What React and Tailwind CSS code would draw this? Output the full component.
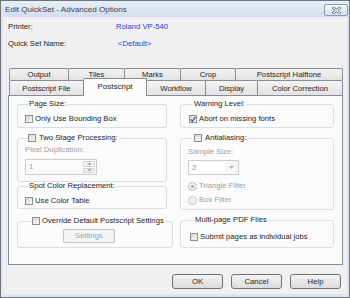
import React from 'react';

const topTabs = [
  { label: 'Output', w: 'w-[60px]' },
  { label: 'Tiles', w: 'w-[57px]' },
  { label: 'Marks', w: 'w-[57px]' },
  { label: 'Crop', w: 'w-[56px]' },
  { label: 'Postscript Halftone', w: 'w-[108px]' },
];

const bottomTabs = [
  { label: 'Postscript File', w: 'w-[75px]' },
  { label: 'Postscript', w: 'w-[64px]', active: true },
  { label: 'Workflow', w: 'w-[60px]' },
  { label: 'Display', w: 'w-[53px]' },
  { label: 'Color Correction', w: 'w-[86px]' },
];

function Checkbox({ checked }) {
  return (
    <span className="flex h-[8px] w-[8px] shrink-0 items-center justify-center border border-[#8e8f8f] bg-linear-to-br from-[#d6d6d6] to-[#f8f8f8]">
      {checked && (
        <svg width="7" height="7" viewBox="0 0 7 7">
          <path d="M0.8 3.4 L2.7 5.6 L6.3 0.8" stroke="#2c4c8e" strokeWidth="1.4" fill="none" />
        </svg>
      )}
    </span>
  );
}

function Radio({ checked }) {
  return (
    <span className="flex h-[9px] w-[9px] shrink-0 items-center justify-center rounded-full border border-[#c4c4c4] bg-[#f2f2f2]">
      {checked && <span className="h-[3px] w-[3px] rounded-full bg-[#a9a9a9]" />}
    </span>
  );
}

function Row({ children, className = '' }) {
  return <div className={`flex h-[10px] items-center whitespace-nowrap leading-[10px] ${className}`}>{children}</div>;
}

function Group({ legend, className = '', children }) {
  return (
    <fieldset className={`rounded-[3px] border border-[#d5dfe5] ${className}`}>
      {legend}
      {children}
    </fieldset>
  );
}

function Legend({ className = '', children }) {
  return <legend className={`whitespace-nowrap px-[1px] leading-[8px] ${className}`}>{children}</legend>;
}

function DialogButton({ children, disabled }) {
  return (
    <div
      className={`flex h-[15px] w-[51px] items-center justify-center rounded-[3px] border bg-linear-to-b ${
        disabled
          ? 'border-[#bfbfbf] from-[#f4f4f4] to-[#f4f4f4] text-[#a3a3a3]'
          : 'border-[#707070] from-[#f3f3f3] to-[#dcdcdc] text-[#1e1e1e]'
      }`}
    >
      {children}
    </div>
  );
}

export default function App() {
  return (
    <div className="flex h-[298px] w-[350px] flex-col border border-[#6f7479] bg-[#dde6f0] font-['Liberation_Sans','Arial',sans-serif] text-[7.7px] text-[#1e1e1e]">
      {/* title bar */}
      <div className="flex h-[16px] shrink-0 items-start justify-between bg-linear-to-b from-[#e7eef8] to-[#d2deed]">
        <span className="mt-[4px] pl-[4px] text-[8.1px] leading-[9px] text-[#3f3f3f]">Edit QuickSet - Advanced Options</span>
        <div className="mr-[1px] mt-[3px] flex h-[12px] w-[24px] items-center justify-center rounded-[2px] border border-[#8c9ab0] bg-linear-to-b from-[#f3f6fa] to-[#d8e1ed]">
          <svg width="9" height="7" viewBox="0 0 9 7">
            <path d="M1.5 1 L7.5 6 M7.5 1 L1.5 6" stroke="#5c6777" strokeWidth="2.6" strokeLinecap="square" />
            <path d="M1.5 1 L7.5 6 M7.5 1 L1.5 6" stroke="#ffffff" strokeWidth="1.1" strokeLinecap="square" />
          </svg>
        </div>
      </div>

      {/* client */}
      <div className="mx-[2px] mb-[3px] flex flex-1 flex-col bg-[#f0f0f0]">
        <div className="mt-[4px] flex h-[12px] items-center pl-[5px] leading-[12px]">
          <span className="w-[108px]">Printer:</span>
          <span className="text-[#2142e0]">Roland VP-540</span>
        </div>
        <div className="mt-[5px] flex h-[12px] items-center pl-[5px] leading-[12px]">
          <span className="w-[110px]">Quick Set Name:</span>
          <span className="text-[#2142e0]">&lt;Default&gt;</span>
        </div>

        {/* tab control */}
        <div className="ml-[5px] mt-[18px] flex w-[335px] flex-col">
          <div className="flex h-[12px] pl-[1px]">
            {topTabs.map((t, i) => (
              <div
                key={t.label}
                className={`flex h-[12px] items-start justify-center rounded-t-[2px] border-x border-t border-[#898c95] bg-linear-to-b from-[#f4f4f4] to-[#e2e2e2] pt-[1px] leading-[9px] ${t.w} ${i > 0 ? '-ml-px' : ''}`}
              >
                {t.label}
              </div>
            ))}
          </div>
          <div className="flex h-[15px] items-end pl-[1px]">
            {bottomTabs.map((t, i) =>
              t.active ? (
                <div
                  key={t.label}
                  className={`relative z-10 -mb-px -ml-px flex h-[18px] items-start justify-center rounded-t-[2px] border-x border-t border-[#898c95] bg-[#fbfbfb] pt-[2px] text-[8px] leading-[11px] ${t.w}`}
                >
                  {t.label}
                </div>
              ) : (
                <div
                  key={t.label}
                  className={`flex h-[15px] items-center justify-center rounded-t-[2px] border-x border-t border-[#898c95] bg-linear-to-b from-[#f4f4f4] to-[#e2e2e2] leading-[11px] ${t.w} ${i > 0 ? '-ml-px' : ''}`}
                >
                  {t.label}
                </div>
              )
            )}
          </div>

          {/* panel */}
          <div className="flex h-[170px] gap-[13px] border border-[#898c95] bg-[#fbfbfb] pl-[8px]">
            {/* left column */}
            <div className="flex w-[150px] flex-col">
              <Group className="mt-[4px] px-[7px] pb-[3px] pt-[6px]" legend={<Legend className="ml-[3px]">Page Size:</Legend>}>
                <Row className="gap-[2px]">
                  <Checkbox />
                  <span>Only Use Bounding Box</span>
                </Row>
              </Group>

              <Group
                className="mt-[6px] px-[7px] pb-[6px] pt-[3px]"
                legend={
                  <Legend className="ml-[2px]">
                    <span className="flex items-center gap-[3px]">
                      <Checkbox />
                      <span>Two Stage Processing:</span>
                    </span>
                  </Legend>
                }
              >
                <Row className="text-[#a0a0a0]">Pixel Duplication:</Row>
                <div className="mt-[4px] flex h-[16px] w-[72px] items-stretch border border-[#c9cdd2] bg-[#fbfbfb]">
                  <span className="flex flex-1 items-center pl-[3px] text-[#9a9a9a]">1</span>
                  <div className="m-[1px] flex w-[12px] flex-col gap-px">
                    <div className="flex flex-1 items-center justify-center border border-[#d6d6d6] bg-[#f4f4f4]">
                      <svg width="5" height="3" viewBox="0 0 5 3"><path d="M0 3 L2.5 0 L5 3 Z" fill="#b3b3b3" /></svg>
                    </div>
                    <div className="flex flex-1 items-center justify-center border border-[#d6d6d6] bg-[#f4f4f4]">
                      <svg width="5" height="3" viewBox="0 0 5 3"><path d="M0 0 L2.5 3 L5 0 Z" fill="#b3b3b3" /></svg>
                    </div>
                  </div>
                </div>
              </Group>

              <Group className="px-[7px] pb-[2px] pt-[6px]" legend={<Legend className="ml-[3px]">Spot Color Replacement:</Legend>}>
                <Row className="gap-[2px]">
                  <Checkbox />
                  <span>Use Color Table</span>
                </Row>
              </Group>

              <Group
                className="mt-[8px] px-[7px] pb-[4px] pt-[4px]"
                legend={
                  <Legend className="ml-[6px]">
                    <span className="flex items-center gap-[2px]">
                      <Checkbox />
                      <span>Override Default Postscript Settings</span>
                    </span>
                  </Legend>
                }
              >
                <div className="ml-[38px] flex h-[14px] w-[52px] items-center justify-center rounded-[2px] border border-[#c3c3c3] bg-[#f4f4f4] text-[#a3a3a3]">
                  Settings
                </div>
              </Group>
            </div>

            {/* right column */}
            <div className="flex w-[154px] flex-col">
              <Group className="mt-[4px] px-[8px] pb-[3px] pt-[6px]" legend={<Legend className="ml-[4px]">Warning Level:</Legend>}>
                <Row className="gap-[2px]">
                  <Checkbox checked />
                  <span>Abort on missing fonts</span>
                </Row>
              </Group>

              <Group
                className="mt-[6px] px-[7px] pb-[4px] pt-[5px]"
                legend={
                  <Legend className="ml-[5px]">
                    <span className="flex items-center gap-[3px]">
                      <Checkbox />
                      <span>Antialiasing:</span>
                    </span>
                  </Legend>
                }
              >
                <Row className="text-[#a0a0a0]">Sample Size:</Row>
                <div className="mt-[3px] flex h-[15px] w-[51px] items-stretch border border-[#c9cdd2] bg-[#ffffff]">
                  <span className="flex flex-1 items-center pl-[3px] text-[#9a9a9a]">2</span>
                  <div className="flex w-[13px] items-center justify-center bg-[#f6f6f6]">
                    <svg width="5" height="3" viewBox="0 0 5 3"><path d="M0 0 L2.5 3 L5 0 Z" fill="#b8b8b8" /></svg>
                  </div>
                </div>
                <Row className="mt-[6px] gap-[2px] text-[#a0a0a0]">
                  <Radio checked />
                  <span>Triangle Filter</span>
                </Row>
                <Row className="mt-[4px] gap-[2px] text-[#a0a0a0]">
                  <Radio />
                  <span>Box Filter</span>
                </Row>
              </Group>

              <Group className="mt-[6px] px-[9px] pb-[5px] pt-[8px]" legend={<Legend className="ml-[4px]">Multi-page PDF Files</Legend>}>
                <Row className="gap-[2px]">
                  <Checkbox />
                  <span>Submit pages as individual jobs</span>
                </Row>
              </Group>
            </div>
          </div>
        </div>

        {/* dialog buttons */}
        <div className="mt-[9px] flex justify-end gap-[8px] pr-[6px]">
          <DialogButton>OK</DialogButton>
          <DialogButton>Cancel</DialogButton>
          <DialogButton>Help</DialogButton>
        </div>
      </div>
    </div>
  );
}
